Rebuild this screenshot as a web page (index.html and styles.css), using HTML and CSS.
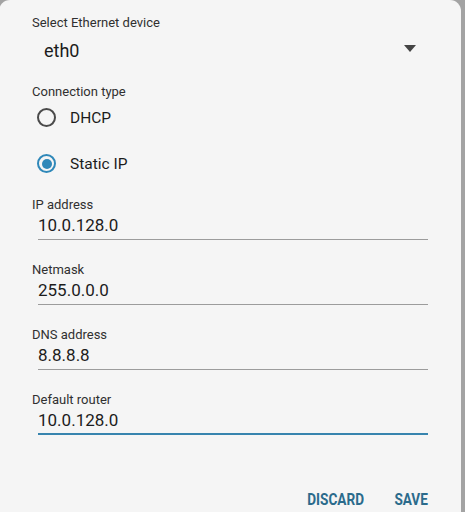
FILE: index.html
```html
<!DOCTYPE html>
<html lang="en">
  <head>
    <meta charset="UTF-8" />
    <meta name="viewport" content="width=device-width, initial-scale=1.0" />
    <title>Ethernet settings</title>
    <link rel="stylesheet" href="styles.css">
  </head>
  <body>
    <div class="dialog">
      <!-- Device spinner -->
      <div class="label">Select Ethernet device</div>
      <div class="spinner">
        <span>eth0</span>
        <svg class="arrow" width="12" height="7" viewBox="0 0 12 7">
          <path d="M0 0 H12 L6 7 Z" fill="#454545" />
        </svg>
      </div>

      <!-- Connection type -->
      <div class="label section">Connection type</div>
      <div class="radio-group">
        <div class="radio-row">
          <span class="radio"></span>
          <span>DHCP</span>
        </div>
        <div class="radio-row">
          <span class="radio checked"></span>
          <span>Static IP</span>
        </div>
      </div>

      <!-- Static settings -->
      <div class="fields">
        <div class="field">
          <div class="label">IP address</div>
          <div class="input">10.0.128.0</div>
        </div>
        <div class="field">
          <div class="label">Netmask</div>
          <div class="input">255.0.0.0</div>
        </div>
        <div class="field">
          <div class="label">DNS address</div>
          <div class="input">8.8.8.8</div>
        </div>
        <div class="field">
          <div class="label">Default router</div>
          <div class="input focused">10.0.128.0</div>
        </div>
      </div>

      <div class="actions">
        <button class="btn"><span>DISCARD</span></button>
        <button class="btn"><span>SAVE</span></button>
      </div>
    </div>
  </body>
</html>
```

FILE: styles.css
```css
body {
  margin: 0;
  background: #a3a3a3;
  font-family: Roboto, "Noto Sans", Arial, sans-serif;
  color: #1c1c1c;
}
.dialog {
  width: 462px;
  height: 512px;
  box-sizing: border-box;
  margin-left: -1px;
  padding: 15px 33px 0 33px;
  background: #f5f5f5;
  border-radius: 11px 11px 0 0;
}
.label {
  font-size: 13px;
  line-height: 16px;
  color: #303030;
}
.section {
  margin-top: 21px;
}
.spinner {
  display: flex;
  align-items: center;
  justify-content: space-between;
  height: 24px;
  margin-top: 8px;
  padding: 0 12px 0 12px;
  font-size: 18px;
  line-height: 24px;
}
.arrow {
  margin-top: -6px;
}
.radio-group {
  display: flex;
  flex-direction: column;
  gap: 11px;
}
.radio-row {
  display: flex;
  align-items: center;
  gap: 14px;
  height: 35px;
  padding-left: 5px;
  font-size: 15.5px;
}
.radio {
  width: 19px;
  height: 19px;
  box-sizing: border-box;
  border: 2px solid #4a4a4a;
  border-radius: 50%;
  display: flex;
  align-items: center;
  justify-content: center;
}
.radio.checked {
  border-color: #2f88b9;
}
.radio.checked::after {
  content: "";
  width: 10px;
  height: 10px;
  border-radius: 50%;
  background: #2f88b9;
}
.fields {
  display: flex;
  flex-direction: column;
  gap: 22px;
  margin-top: 16px;
}
.field .input {
  margin: 2px 0 0 6px;
  font-size: 17px;
  line-height: 20px;
  padding-bottom: 4px;
  border-bottom: 1px solid #9c9c9c;
}
.field .input.focused {
  padding-bottom: 3px;
  border-bottom: 2px solid #3784ae;
}
.actions {
  display: flex;
  justify-content: flex-end;
  gap: 22px;
  margin-top: 54px;
}
.btn {
  background: none;
  border: none;
  padding: 0;
  font-family: Roboto, Arial, sans-serif;
  font-size: 17px;
  line-height: 20px;
  font-weight: 700;
  color: #2b6b8c;
  cursor: pointer;
}
.btn span {
  display: inline-block;
  transform: scaleX(0.8);
  transform-origin: right center;
}
```
